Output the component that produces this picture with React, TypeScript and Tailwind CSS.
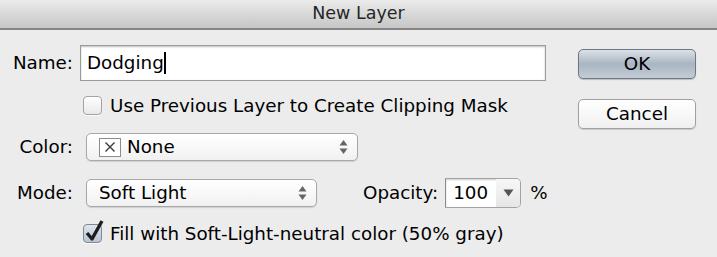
import { useState } from 'react';

const font = { fontFamily: '"DejaVu Sans", "Liberation Sans", sans-serif' };

function UpDown() {
  return (
    <svg width="9" height="16" viewBox="0 0 9 16" className="shrink-0">
      <path d="M4.5 1 L8.5 6.5 L0.5 6.5 Z" fill="#666" />
      <path d="M4.5 15 L8.5 9.5 L0.5 9.5 Z" fill="#666" />
    </svg>
  );
}

function Checkbox({ checked }: { checked?: boolean }) {
  return (
    <div className="relative w-[19px] h-[19px] shrink-0">
      <div
        className={
          checked
            ? 'w-full h-full rounded-[4px] border border-[#7f8894] bg-gradient-to-b from-[#dfe6ee] to-[#b9c5d3] shadow-[0_1px_0_rgba(255,255,255,0.8)]'
            : 'w-full h-full rounded-[4px] border border-[#a3a3a3] bg-gradient-to-b from-white to-[#e9e9e9] shadow-[0_1px_0_rgba(255,255,255,0.8)]'
        }
      />
      {checked && (
        <svg width="20" height="24" viewBox="0 0 20 24" className="absolute left-[2px] -top-[5px]">
          <path d="M2 14 L7 20 L17 2" fill="none" stroke="#1e1e1e" strokeWidth="3.4" strokeLinejoin="round" />
        </svg>
      )}
    </div>
  );
}

export default function App() {
  const [name, setName] = useState('Dodging');

  return (
    <div className="w-[717px] h-[257px] bg-[#ececec] text-black overflow-hidden" style={font}>
      {/* Title bar */}
      <div className="h-[30px] flex items-center justify-center bg-gradient-to-b from-[#ebebeb] to-[#c6c6c6] border-b-2 border-[#858585]">
        <span className="text-[17.5px] text-[#262626] leading-none">New Layer</span>
      </div>

      <div className="flex">
        {/* Left column */}
        <div className="w-[578px] text-[18.3px]">
          {/* Name */}
          <div className="flex items-center h-[36px] mt-[15px]">
            <div className="w-[73px] text-right">Name:</div>
            <div className="ml-[7px] w-[466px] h-[36px] border border-[#9b9b9b] bg-white shadow-[inset_0_1px_2px_rgba(0,0,0,0.25)] flex items-center pl-[6px]">
              <span>{name}</span>
              <span className="w-[2px] h-[22px] bg-black" />
              <input className="hidden" value={name} onChange={(e) => setName(e.target.value)} />
            </div>
          </div>

          {/* Clipping mask */}
          <div className="flex items-center h-[19px] mt-[15px] pl-[83px]">
            <Checkbox />
            <span className="ml-[8px] whitespace-nowrap">Use Previous Layer to Create Clipping Mask</span>
          </div>

          {/* Color */}
          <div className="flex items-center h-[28px] mt-[18px]">
            <div className="w-[73px] text-right">Color:</div>
            <div className="ml-[13px] w-[272px] h-[28px] rounded-[5px] border border-[#a8a8a8] bg-gradient-to-b from-white to-[#f1f1f1] shadow-[0_1px_1px_rgba(0,0,0,0.12)] flex items-center pl-[12px] pr-[9px]">
              <div className="w-[22px] h-[19px] border border-[#8d8d8d] bg-white flex items-center justify-center">
                <svg width="12" height="12" viewBox="0 0 12 12">
                  <path d="M1.5 1.5 L10.5 10.5 M10.5 1.5 L1.5 10.5" stroke="#3a3a3a" strokeWidth="1.4" />
                </svg>
              </div>
              <span className="ml-[6px] flex-1">None</span>
              <UpDown />
            </div>
          </div>

          {/* Mode + Opacity */}
          <div className="flex items-center h-[30px] mt-[17px]">
            <div className="w-[73px] text-right">Mode:</div>
            <div className="ml-[13px] w-[231px] h-[28px] rounded-[5px] border border-[#a8a8a8] bg-gradient-to-b from-white to-[#f1f1f1] shadow-[0_1px_1px_rgba(0,0,0,0.12)] flex items-center pl-[12px] pr-[9px]">
              <span className="flex-1">Soft Light</span>
              <UpDown />
            </div>
            <div className="ml-[46px]">Opacity:</div>
            <div className="ml-[7px] w-[76px] h-[30px] flex border border-[#a3a3a3] border-l-[#8a8a8a] rounded-r-[5px] bg-white shadow-[inset_0_1px_2px_rgba(0,0,0,0.2)] overflow-hidden">
              <div className="w-[50px] flex items-center pl-[7px]">100</div>
              <div className="flex-1 flex items-center justify-center bg-gradient-to-b from-[#f7f7f7] to-[#e6e6e6]">
                <svg width="11" height="8" viewBox="0 0 11 8">
                  <path d="M0.5 0.5 L10.5 0.5 L5.5 7.5 Z" fill="#555" />
                </svg>
              </div>
            </div>
            <div className="ml-[9px]">%</div>
          </div>

          {/* Fill neutral */}
          <div className="flex items-center h-[19px] mt-[16px] pl-[83px]">
            <Checkbox checked />
            <span className="ml-[8px] whitespace-nowrap">Fill with Soft-Light-neutral color (50% gray)</span>
          </div>
        </div>

        {/* Buttons */}
        <div className="w-[118px] pt-[19px] flex flex-col gap-[20px] text-[18.3px]">
          <button className="h-[30px] rounded-[5px] border border-[#6e7885] bg-gradient-to-b from-[#dbe1e8] via-[#aab5c2] to-[#c3ccd6] shadow-[0_1px_1px_rgba(0,0,0,0.2)] text-black">
            OK
          </button>
          <button className="h-[30px] rounded-[5px] border border-[#a0a0a0] bg-gradient-to-b from-white to-[#f0f0f0] shadow-[0_1px_1px_rgba(0,0,0,0.15)] text-black">
            Cancel
          </button>
        </div>
      </div>
    </div>
  );
}
